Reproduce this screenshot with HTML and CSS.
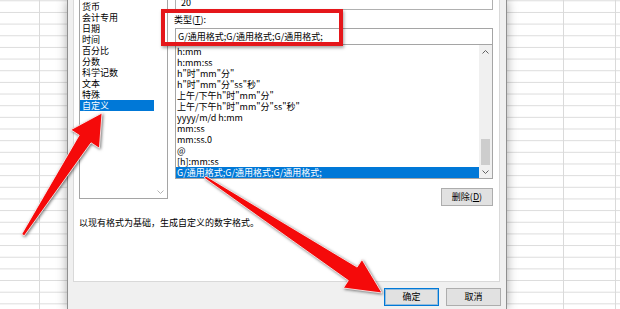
FILE: index.html
```html
<!DOCTYPE html>
<html lang="zh-CN">
<head>
    <meta charset="UTF-8">
    <meta name="viewport" content="width=device-width, initial-scale=1.0">
    <title>设置单元格格式</title>
    <link rel="stylesheet" href="styles.css">
</head>
<body>

<div class="sheet">
    <div class="dialog">
        <div class="panel">
            <div class="top">
                <div class="cat-list">
                    <ul class="cat-items">
                        <li>货币</li>
                        <li>会计专用</li>
                        <li>日期</li>
                        <li>时间</li>
                        <li>百分比</li>
                        <li>分数</li>
                        <li>科学记数</li>
                        <li>文本</li>
                        <li>特殊</li>
                        <li class="selected">自定义</li>
                    </ul>
                    <div class="scroll scroll-light">
                        <div class="track"></div>
                        <div class="arrow">
                            <svg width="7" height="4" viewBox="0 0 7 4"><polyline points="0.5,0.5 3.5,3.5 6.5,0.5" fill="none" stroke="#b4b4b4" stroke-width="1"/></svg>
                        </div>
                    </div>
                </div>

                <div class="right-col">
                    <div class="sample-box">20</div>
                    <div class="type-label">类型(<u>T</u>):</div>
                    <div class="type-input">G/通用格式;G/通用格式;G/通用格式;</div>
                    <div class="fmt-list">
                        <ul class="fmt-items">
                            <li>h:mm</li>
                            <li>h:mm:ss</li>
                            <li>h"时"mm"分"</li>
                            <li>h"时"mm"分"ss"秒"</li>
                            <li>上午/下午h"时"mm"分"</li>
                            <li>上午/下午h"时"mm"分"ss"秒"</li>
                            <li>yyyy/m/d h:mm</li>
                            <li>mm:ss</li>
                            <li>mm:ss.0</li>
                            <li>@</li>
                            <li>[h]:mm:ss</li>
                            <li class="selected">G/通用格式;G/通用格式;G/通用格式;</li>
                        </ul>
                        <div class="scroll">
                            <div class="arrow">
                                <svg width="7" height="4" viewBox="0 0 7 4"><polyline points="0.5,3.5 3.5,0.5 6.5,3.5" fill="none" stroke="#606060" stroke-width="1"/></svg>
                            </div>
                            <div class="track">
                                <div class="thumb"></div>
                            </div>
                            <div class="arrow">
                                <svg width="7" height="4" viewBox="0 0 7 4"><polyline points="0.5,0.5 3.5,3.5 6.5,0.5" fill="none" stroke="#606060" stroke-width="1"/></svg>
                            </div>
                        </div>
                    </div>
                    <div class="delete-row">
                        <button class="btn btn-delete">删除(<u>D</u>)</button>
                    </div>
                </div>
            </div>

            <p class="desc">以现有格式为基础，生成自定义的数字格式。</p>
        </div>

        <div class="actions">
            <button class="btn btn-default">确定</button>
            <button class="btn">取消</button>
        </div>
    </div>

    <!-- 标注：红框和箭头 -->
    <div class="mark-box"></div>
    <svg class="arrows" width="620" height="309" viewBox="0 0 620 309">
        <polygon points="102,113 99.4,148.2 91,142.8 24.3,235.8 21.7,234.2 79.2,135.2 70.8,129.8" fill="#f50a0a" stroke="#ffffff" stroke-width="0.8" stroke-linejoin="miter"/>
        <polygon points="382,293 362,259.6 357.1,267.1 205.7,176 204.3,178 348.3,280.5 343.4,288" fill="#f50a0a" stroke="#ffffff" stroke-width="0.8" stroke-linejoin="miter"/>
    </svg>
</div>

</body>
</html>
```

FILE: styles.css
```css
/* Reset dan dasar */
* {
    margin: 0;
    padding: 0;
    box-sizing: border-box;
}

body {
    width: 620px;
    height: 309px;
    overflow: hidden;
    font-family: "Noto Sans CJK SC", "Noto Sans", sans-serif;
    font-size: 9px;
    color: #000;
    background-color: #fff;
}

/* Lembar kerja di belakang dialog */
.sheet {
    position: relative;
    height: 309px;
    overflow: hidden;
    background-color: #fff;
    background-image:
        linear-gradient(to right,
            transparent 39px, #dadada 39px, #dadada 40px, transparent 40px,
            transparent 563px, #dadada 563px, #dadada 564px, transparent 564px,
            transparent 615px, #dadada 615px, #dadada 616px, transparent 616px),
        linear-gradient(#dcdcdc 1px, transparent 1px);
    background-size: 100% 100%, 100% 11.67px;
    background-position: 0 0, 0 0.3px;
}

.dialog {
    margin-left: 67px;
    width: 440px;
    height: 309px;
    background-color: #f0f0f0;
    border-left: 1px solid #8f8f8f;
    border-right: 1px solid #8f8f8f;
    box-shadow: 0 0 10px rgba(0, 0, 0, 0.35);
}

.panel {
    margin: 0 6px 0 5px;
    height: 282px;
    background-color: #fff;
    border: 1px solid #d9d9d9;
    border-top: none;
    padding: 0 6px 0 5px;
}

.top {
    display: flex;
    gap: 7px;
    align-items: flex-start;
}

ul {
    list-style: none;
}

li {
    height: 11px;
    line-height: 11px;
    white-space: nowrap;
}

li.selected {
    background-color: #0078d7;
    color: #fff;
}

/* Daftar kategori */
.cat-list {
    width: 89px;
    height: 199px;
    display: flex;
    border: 1px solid #a5a5a5;
    border-top: none;
}

.cat-items {
    flex: 1;
    padding-top: 1px;
}

.cat-items li {
    padding-left: 2px;
}

/* Scrollbar */
.scroll {
    width: 13px;
    display: flex;
    flex-direction: column;
    background-color: #f0f0f0;
}

.scroll-light {
    background-color: #fff;
}

.scroll .arrow {
    height: 13px;
    display: flex;
    align-items: center;
    justify-content: center;
}

.scroll .track {
    flex: 1;
    display: flex;
    flex-direction: column;
    justify-content: flex-end;
}

.thumb {
    height: 26px;
    margin: 0 2px 0 2px;
    background-color: #cdcdcd;
}

/* Kolom kanan */
.right-col {
    flex: 1;
}

.sample-box {
    height: 10px;
    border: 1px solid #b0b0b0;
    border-top: none;
    padding-left: 5px;
    line-height: 6px;
}

.type-label {
    margin-top: 4px;
    margin-left: -1px;
    line-height: 12px;
}

.type-input {
    margin-top: 2px;
    height: 17px;
    border: 1px solid #a5a5a5;
    padding-left: 2px;
    line-height: 15px;
    white-space: nowrap;
}

.fmt-list {
    margin-top: -1px;
    height: 135px;
    display: flex;
    border: 1px solid #a5a5a5;
}

.fmt-items {
    flex: 1;
    padding-top: 1px;
}

.fmt-items li {
    padding-left: 1px;
}

.delete-row {
    display: flex;
    justify-content: flex-end;
    margin-top: 9px;
}

/* Tombol */
.btn {
    width: 55px;
    height: 18px;
    font-family: inherit;
    font-size: 9px;
    color: #000;
    background-color: #e1e1e1;
    border: 1px solid #adadad;
    line-height: 14px;
}

.btn-delete {
    width: 52px;
}

.btn-default {
    border-color: #0078d7;
    box-shadow: inset 0 0 0 1px rgba(0, 120, 215, 0.35);
}

.desc {
    margin-top: 11px;
    line-height: 12px;
}

.actions {
    display: flex;
    justify-content: flex-end;
    gap: 7px;
    padding-right: 5px;
    margin-top: 6px;
}

/* Anotasi merah */
.mark-box {
    position: absolute;
    left: 161px;
    top: 9px;
    width: 182px;
    height: 37px;
    border: 4px solid #e5171b;
    box-shadow: 1px 2px 3px rgba(0, 0, 0, 0.35);
}

.arrows {
    position: absolute;
    left: 0;
    top: 0;
    pointer-events: none;
    filter: drop-shadow(1px 1px 1.5px rgba(0, 0, 0, 0.55));
}
```
